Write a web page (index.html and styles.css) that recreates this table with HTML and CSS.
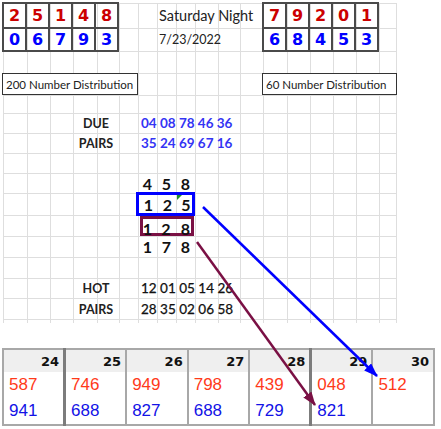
FILE: index.html
```html
<!DOCTYPE html>
<html>
<head>
<meta charset="utf-8">
<link rel="stylesheet" href="styles.css">
</head>
<body>
<div class="page">
  <div class="sheet">
    <div class="vlines"><i></i><i></i><i></i><i></i><i></i><i></i><i></i><i></i><i></i><i></i><i></i><i></i><i></i><i></i><i></i><i></i><i></i><i></i></div>
    <div class="hlines"><i></i><i></i><i></i><i></i><i></i><i></i><i></i><i></i><i></i><i></i><i></i><i></i><i></i><i></i><i></i></div>

    <div class="digits left">
      <span class="red">2</span><span class="red">5</span><span class="red">1</span><span class="red">4</span><span class="red">8</span>
      <span class="blue">0</span><span class="blue">6</span><span class="blue">7</span><span class="blue">9</span><span class="blue">3</span>
    </div>
    <div class="title">Saturday Night</div>
    <div class="date">7/23/2022</div>
    <div class="digits right">
      <span class="red">7</span><span class="red">9</span><span class="red">2</span><span class="red">0</span><span class="red">1</span>
      <span class="blue">6</span><span class="blue">8</span><span class="blue">4</span><span class="blue">5</span><span class="blue">3</span>
    </div>

    <div class="dist d200">200 Number Distribution</div>
    <div class="dist d60">60 Number Distribution</div>

    <div class="label row-due">DUE</div>
    <div class="nums due row-due">04 08 78 46 36</div>
    <div class="label row-pairs1">PAIRS</div>
    <div class="nums due row-pairs1">35 24 69 67 16</div>

    <div class="trio row-a"><span>4</span><span>5</span><span>8</span></div>
    <div class="trio box-blue row-b"><span>1</span><span>2</span><span class="flag">5</span></div>
    <div class="trio box-maroon row-c"><span>1</span><span>2</span><span>8</span></div>
    <div class="trio row-d"><span>1</span><span>7</span><span>8</span></div>

    <div class="label row-hot">HOT</div>
    <div class="nums hot row-hot">12 01 05 14 26</div>
    <div class="label row-pairs2">PAIRS</div>
    <div class="nums hot row-pairs2">28 35 02 06 58</div>
  </div>

  <table class="days">
    <tr>
      <th>24</th><th class="sep">25</th><th>26</th><th>27</th><th>28</th><th class="sep">29</th><th>30</th>
    </tr>
    <tr class="r-red">
      <td>587</td><td class="sep">746</td><td>949</td><td>798</td><td>439</td><td class="sep">048</td><td>512</td>
    </tr>
    <tr class="r-blue">
      <td>941</td><td class="sep">688</td><td>827</td><td>688</td><td>729</td><td class="sep">821</td><td></td>
    </tr>
  </table>

  <svg class="arrows" width="441" height="429" viewBox="0 0 441 429">
    <defs>
      <marker id="ah-blue" markerUnits="userSpaceOnUse" markerWidth="14" markerHeight="10" refX="13" refY="5" orient="auto">
        <path d="M0,0 L14,5 L0,10 z" fill="#0000ff"/>
      </marker>
      <marker id="ah-maroon" markerUnits="userSpaceOnUse" markerWidth="14" markerHeight="10" refX="13" refY="5" orient="auto">
        <path d="M0,0 L14,5 L0,10 z" fill="#7a1044"/>
      </marker>
    </defs>
    <line x1="203" y1="207" x2="377" y2="376" stroke="#0000ff" stroke-width="2.5" marker-end="url(#ah-blue)"/>
    <line x1="197" y1="242" x2="315" y2="405" stroke="#7a1044" stroke-width="2.5" marker-end="url(#ah-maroon)"/>
  </svg>
</div>
</body>
</html>
```

FILE: styles.css
```css
html, body {
  margin: 0;
  padding: 0;
  background: #ffffff;
}

.page {
  position: relative;
  width: 441px;
  height: 429px;
  overflow: hidden;
  font-family: Lato, "Open Sans", sans-serif;
  color: #1a1a1a;
}

.sheet {
  --cols: 24px 23px 23px 24px 22px 19px 19px 19px 19px 23px 22px 23px 24px 23px 23px 23px 23px 18px;
  --rows: 25px 23px 22px 22px 18px 20px 20px 20px 20px 22px 21px 21px 21px 20px 22px;
  display: grid;
  grid-template-columns: var(--cols);
  grid-template-rows: var(--rows);
  margin: 3px 0 0 3px;
  width: 394px;
}

.vlines {
  grid-area: 1 / 1 / -1 / -1;
  display: grid;
  grid-template-columns: var(--cols);
  border-right: 1px solid #dedede;
  margin-bottom: -3px;
}
.vlines i {
  border-left: 1px solid #dedede;
}

.hlines {
  grid-area: 1 / 1 / -1 / -1;
  display: grid;
  grid-template-rows: var(--rows);
  border-bottom: 1px solid #dedede;
}
.hlines i {
  border-top: 1px solid #dedede;
}

/* top digit boxes */
.digits {
  grid-row: 1 / 3;
  display: grid;
  grid-template-columns: repeat(5, 1fr);
  grid-template-rows: 25px 23px;
  border-top: 2px solid #4a4a4a;
  border-left: 2px solid #4a4a4a;
  margin: -1px 0 -1px -1px;
  font-family: "DejaVu Sans", Verdana, sans-serif;
  font-weight: bold;
  font-size: 16px;
}
.digits.left { grid-column: 1 / 6; }
.digits.right { grid-column: 13 / 18; }
.digits span {
  display: flex;
  align-items: center;
  justify-content: center;
  border-right: 2px solid #4a4a4a;
  border-bottom: 2px solid #4a4a4a;
}
.red { color: #cc0000; }
.blue { color: #0000ff; }

.title, .date {
  grid-column: 8 / 13;
  display: flex;
  align-items: center;
  padding-left: 2px;
  font-size: 14.5px;
  color: #222222;
  white-space: nowrap;
}
.title { grid-row: 1; }
.date { grid-row: 2; font-size: 12.5px; }

.dist {
  grid-row: 4;
  display: flex;
  align-items: center;
  border: 1.5px solid #333333;
  margin: 0 0 0 -1px;
  padding-left: 3px;
  font-size: 11.5px;
  color: #222222;
  white-space: nowrap;
  background: #ffffff;
}
.d200 { grid-column: 1 / 7; }
.d60 { grid-column: 13 / 19; }

.label {
  grid-column: 4 / 6;
  display: flex;
  align-items: center;
  justify-content: center;
  font-weight: bold;
  font-size: 12.5px;
  color: #222222;
}
.nums {
  grid-column: 7 / 12;
  display: flex;
  align-items: center;
  padding-left: 3px;
  font-size: 13.5px;
  white-space: nowrap;
}
.nums.due {
  color: #3434f4;
  font-weight: bold;
  font-size: 13.5px;
}
.nums.hot {
  color: #111111;
  -webkit-text-stroke: 0.25px #111111;
}

.row-due { grid-row: 6; }
.row-pairs1 { grid-row: 7; }
.row-a { grid-row: 9; }
.row-b { grid-row: 10; }
.row-c { grid-row: 11; }
.row-d { grid-row: 12; }
.row-hot { grid-row: 14; }
.row-pairs2 { grid-row: 15; }

.trio {
  grid-column: 7 / 10;
  display: grid;
  grid-template-columns: 19px 19px 19px;
  font-weight: bold;
  font-size: 16px;
  color: #111111;
}
.trio span {
  display: flex;
  align-items: center;
  justify-content: center;
  position: relative;
}
.box-blue {
  border: 3px solid #0000ff;
  margin: -1px 0 -1px -2px;
  grid-template-columns: 19px 19px 18px;
}
.box-maroon {
  border: 3px solid #7a1044;
  margin: 1px 1px 0 2px;
  grid-template-columns: 9px 28px 11px;
}
.flag::before {
  content: "";
  position: absolute;
  left: 0;
  top: 0;
  border-top: 5px solid #1f8f2a;
  border-right: 5px solid transparent;
}

/* bottom calendar */
.days {
  border-collapse: collapse;
  table-layout: fixed;
  width: 433px;
  margin: 28px 0 0 2px;
  border-top: 2px solid #a8a8a8;
  border-bottom: 2px solid #a8a8a8;
}
.days th, .days td {
  border-left: 2px solid #a8a8a8;
  border-right: 2px solid #a8a8a8;
}
.days .sep {
  border-left: 3px solid #7c7c7c;
}
.days th {
  height: 22px;
  padding: 0 4px 0 0;
  background: #efefef;
  text-align: right;
  font-family: "DejaVu Sans", Verdana, sans-serif;
  font-weight: bold;
  font-size: 13px;
  color: #111111;
}
.days td {
  height: 26px;
  padding: 0 0 0 5px;
  text-align: left;
  font-family: "Liberation Sans", Arial, sans-serif;
  font-size: 17px;
}
.r-red td { color: #ff3a1a; }
.r-blue td { color: #1212e6; }

.arrows {
  position: absolute;
  left: 0;
  top: 0;
  pointer-events: none;
}
```
